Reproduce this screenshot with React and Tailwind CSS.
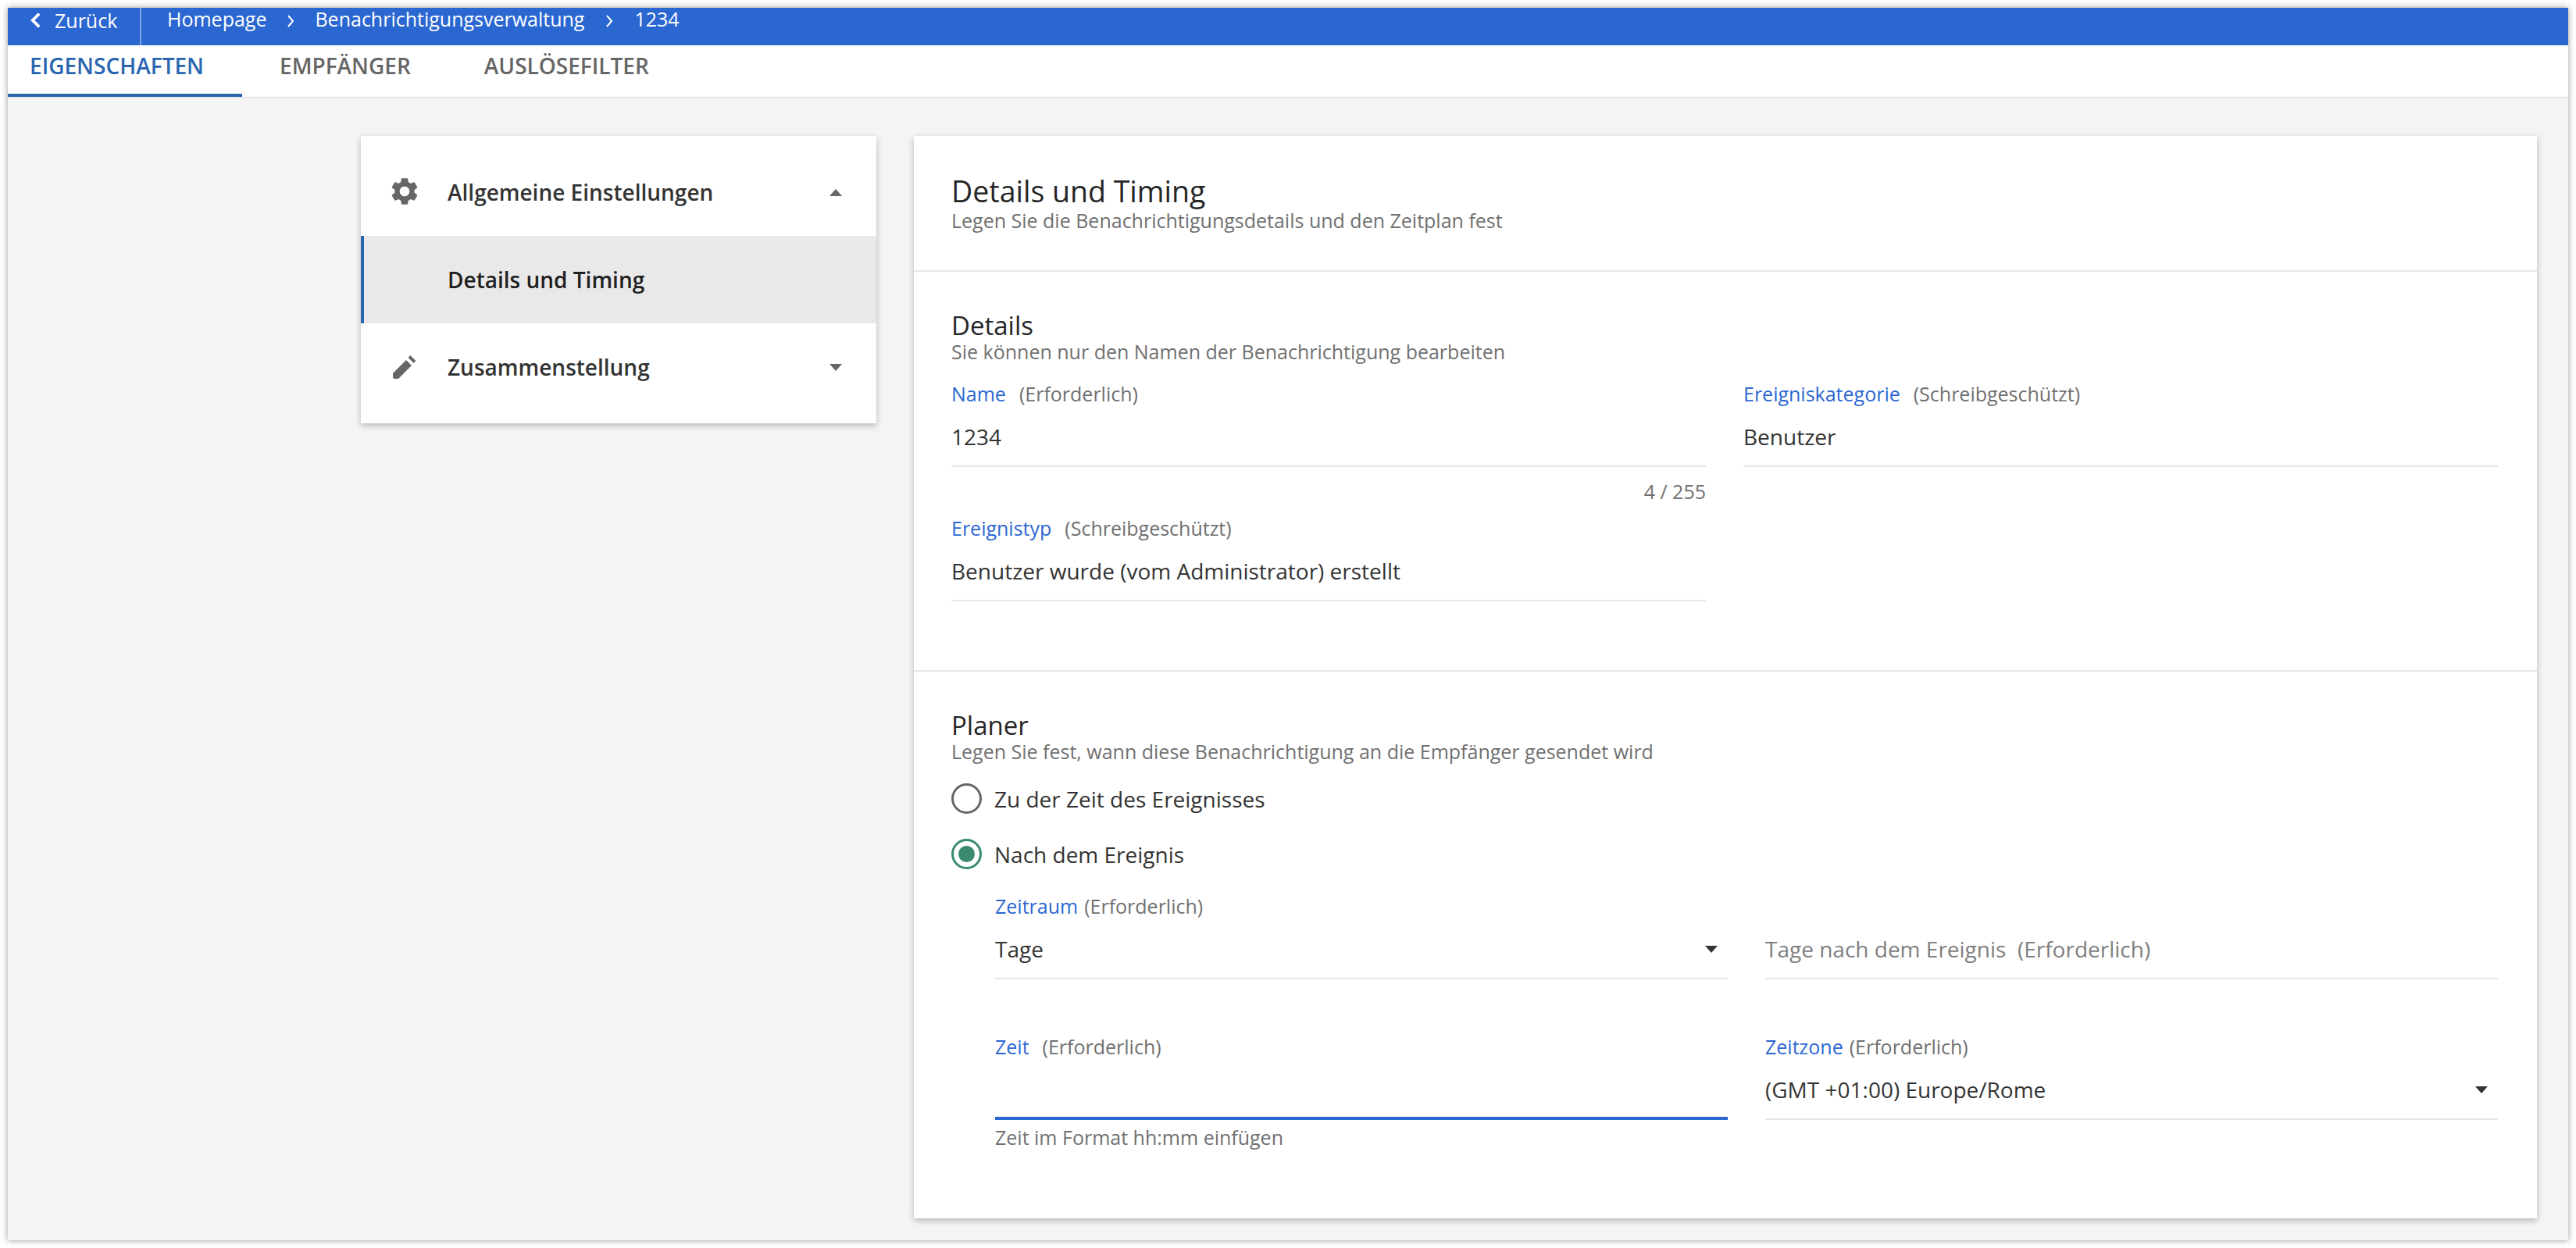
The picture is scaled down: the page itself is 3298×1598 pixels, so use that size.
const F = "font-['Open_Sans',sans-serif]";

function Gear() {
  return (
    <svg viewBox="0 0 24 24" className="w-[42px] h-[42px] shrink-0 fill-[#666666] mb-[3px]">
      <path d="M19.14 12.94c.04-.3.06-.61.06-.94 0-.32-.02-.64-.07-.94l2.03-1.58c.18-.14.23-.41.12-.61l-1.92-3.32c-.12-.22-.37-.29-.59-.22l-2.39.96c-.5-.38-1.03-.7-1.62-.94l-.36-2.54c-.04-.24-.24-.41-.48-.41h-3.84c-.24 0-.43.17-.47.41l-.36 2.54c-.59.24-1.13.57-1.62.94l-2.39-.96c-.22-.08-.47 0-.59.22L2.74 8.87c-.12.21-.08.47.12.61l2.03 1.58c-.05.3-.09.63-.09.94s.02.64.07.94l-2.03 1.58c-.18.14-.23.41-.12.61l1.92 3.32c.12.22.37.29.59.22l2.39-.96c.5.38 1.03.7 1.62.94l.36 2.54c.05.24.24.41.48.41h3.84c.24 0 .44-.17.47-.41l.36-2.54c.59-.24 1.13-.56 1.62-.94l2.39.96c.22.08.47 0 .59-.22l1.92-3.32c.12-.22.07-.47-.12-.61l-2.01-1.58zM12 15.6c-1.98 0-3.6-1.62-3.6-3.6s1.62-3.6 3.6-3.6 3.6 1.62 3.6 3.6-1.62 3.6-3.6 3.6z" />
    </svg>
  );
}

function Pencil() {
  return (
    <svg viewBox="0 0 42 42" className="w-[42px] h-[42px] shrink-0 fill-[#666666]">
      <path d="M23 12 L30 19 L13 36 L8 36 Q6 36 6 34 L6 29 Z" />
      <path d="M28.4 6.1 L35.4 13.1 L32.6 15.9 L25.6 8.9 Z" />
    </svg>
  );
}

function Triangle({ up, className }) {
  return (
    <svg viewBox="0 0 16 9" className={className}>
      <path d={up ? "M8 0 L16 9 L0 9 Z" : "M0 0 L16 0 L8 9 Z"} />
    </svg>
  );
}

function Label({ name, hint, gap = "ml-[17px]" }) {
  return (
    <div className="h-[30px] leading-[30px] text-[25px] whitespace-nowrap">
      <span className="text-[#2b67d1] font-medium">{name}</span>
      <span className={`text-[#707070] ${gap}`}>{hint}</span>
    </div>
  );
}

function Field({ name, hint, gap, value, arrow, placeholder, focused }) {
  return (
    <div>
      {name ? <Label name={name} hint={hint} gap={gap} /> : <div className="h-[30px]" />}
      <div
        className={`mt-[20px] flex items-start justify-between h-[59px] ${
          focused ? "border-b-[4px] border-[#2b67d1]" : "border-b-2 border-[#e6e6e6]"
        }`}
      >
        <span className={`leading-[40px] whitespace-pre text-[28px] ${placeholder ? "text-[#808080]" : "text-[#333333]"}`}>{value}</span>
        {arrow && <Triangle className="w-[16px] h-[9px] mt-[16px] fill-[#333333] mr-[13px]" />}
      </div>
    </div>
  );
}

function Heading({ title, sub }) {
  return (
    <>
      <h2 className="h-[38px] leading-[40px] text-[33px] font-medium text-[#262626]">{title}</h2>
      <p className="h-[30px] leading-[30px] text-[25px] text-[#707070]">{sub}</p>
    </>
  );
}

function Radio({ label, checked, className }) {
  return (
    <div className={`flex items-center h-[40px] ${className}`}>
      <span
        className={`w-[39px] h-[39px] rounded-full border-[3px] flex items-center justify-center ${
          checked ? "border-[#3a8a70]" : "border-[#666666]"
        }`}
      >
        {checked && <span className="w-[21px] h-[21px] rounded-full bg-[#3a8a70]" />}
      </span>
      <span className="ml-[16px] pt-[1px] text-[28px] text-[#333333]">{label}</span>
    </div>
  );
}

function MenuRow({ icon, label, up }) {
  return (
    <div className="h-[112px] flex items-center pl-[35px] pr-[44px]">
      {icon}
      <span className="ml-[34px] text-[28px] font-semibold text-[#333333] flex-1">{label}</span>
      <Triangle up={up} className="w-[16px] h-[9px] fill-[#666666]" />
    </div>
  );
}

export default function App() {
  return (
    <div className={`${F} h-screen w-full bg-white p-[10px]`}>
      <div className="h-full flex flex-col bg-[#f4f4f4] shadow-[0_0_8px_rgba(0,0,0,0.4)]">
        <header className="h-[48px] shrink-0 flex items-stretch bg-[#2b67d1] text-white text-[25px] whitespace-nowrap">
          <div className="w-[171px] flex items-center border-r-2 border-[#7ea3e2] pl-[28px] pb-[14px]">
            <svg viewBox="0 0 16 24" className="w-[15px] h-[24px] fill-none stroke-white stroke-[4] mb-[2px]">
              <path d="M13 3 L4 12 L13 21" />
            </svg>
            <span className="ml-[17px]">Zurück</span>
          </div>
          <nav className="flex items-center pl-[33px] pb-[18px]">
            <span>Homepage</span>
            <svg viewBox="0 0 10 18" className="w-[10px] h-[18px] ml-[26px] mr-[26px] mt-[3px] fill-none stroke-white stroke-2">
              <path d="M2 2 L8 9 L2 16" />
            </svg>
            <span>Benachrichtigungsverwaltung</span>
            <svg viewBox="0 0 10 18" className="w-[10px] h-[18px] mx-[27px] mt-[3px] fill-none stroke-white stroke-2">
              <path d="M2 2 L8 9 L2 16" />
            </svg>
            <span>1234</span>
          </nav>
        </header>

        <div className="h-[68px] shrink-0 flex bg-white border-b-2 border-[#e6e6e6] text-[28px] font-semibold whitespace-nowrap">
          <div className="w-[300px] h-[66px] pl-[28px] pt-[6px] leading-[40px] text-[#2a66b0] border-b-4 border-[#2a66b0]">EIGENSCHAFTEN</div>
          <div className="ml-[48px] pt-[6px] leading-[40px] text-[#666666]">EMPFÄNGER</div>
          <div className="ml-[94px] pt-[6px] leading-[40px] text-[#666666]">AUSLÖSEFILTER</div>
        </div>

        <main className="flex-1 flex items-start gap-[48px] pl-[452px] pr-[40px] pt-[48px]">
          <aside className="w-[660px] shrink-0 h-[368px] py-[16px] bg-white shadow-[0_3px_8px_rgba(0,0,0,0.25)]">
            <MenuRow icon={<Gear />} label="Allgemeine Einstellungen" up />
            <div className="h-[112px] flex items-center pl-[107px] bg-[#e9e9e9] border-l-4 border-[#2a66b0] text-[28px] font-semibold text-[#1f1f1f]">
              Details und Timing
            </div>
            <MenuRow icon={<Pencil />} label="Zusammenstellung" />
          </aside>

          <section className="flex-1 h-[1386px] bg-white shadow-[0_3px_8px_rgba(0,0,0,0.25)]">
            <div className="h-[174px] pl-[48px] pr-[50px] pt-[49px] border-b-2 border-[#e8e8e8]">
              <h1 className="h-[44px] leading-[44px] text-[37.5px] font-medium text-[#262626]">Details und Timing</h1>
              <p className="h-[34px] leading-[30px] text-[25px] text-[#707070]">Legen Sie die Benachrichtigungsdetails und den Zeitplan fest</p>
            </div>

            <div className="h-[512px] pl-[48px] pr-[50px] pt-[49px] border-b-2 border-[#e8e8e8]">
              <Heading title="Details" sub="Sie können nur den Namen der Benachrichtigung bearbeiten" />
              <div className="mt-[24px] grid grid-cols-2 gap-x-[48px]">
                <div>
                  <Field name="Name" hint="(Erforderlich)" value="1234" />
                  <div className="mt-[16px] h-[30px] leading-[30px] text-right text-[25px] text-[#707070]">4 / 255</div>
                  <div className="mt-[17px]">
                    <Field name="Ereignistyp" hint="(Schreibgeschützt)" value="Benutzer wurde (vom Administrator) erstellt" />
                  </div>
                </div>
                <Field name="Ereigniskategorie" hint="(Schreibgeschützt)" value="Benutzer" />
              </div>
            </div>

            <div className="pl-[48px] pr-[50px] pt-[49px]">
              <Heading title="Planer" sub="Legen Sie fest, wann diese Benachrichtigung an die Empfänger gesendet wird" />
              <Radio className="mt-[25px]" label="Zu der Zeit des Ereignisses" />
              <Radio className="mt-[31px]" label="Nach dem Ereignis" checked />
              <div className="mt-[32px] pl-[56px] grid grid-cols-2 gap-x-[48px] gap-y-[71px]">
                <Field name="Zeitraum" hint="(Erforderlich)" gap="ml-[8px]" value="Tage" arrow />
                <Field value={"Tage nach dem Ereignis  (Erforderlich)"} placeholder />
                <div>
                  <Field name="Zeit" hint="(Erforderlich)" value="" focused />
                  <p className="mt-[7px] h-[30px] leading-[30px] text-[25px] text-[#707070]">Zeit im Format hh:mm einfügen</p>
                </div>
                <Field name="Zeitzone" hint="(Erforderlich)" gap="ml-[8px]" value="(GMT +01:00) Europe/Rome" arrow />
              </div>
            </div>
          </section>
        </main>
      </div>
    </div>
  );
}
